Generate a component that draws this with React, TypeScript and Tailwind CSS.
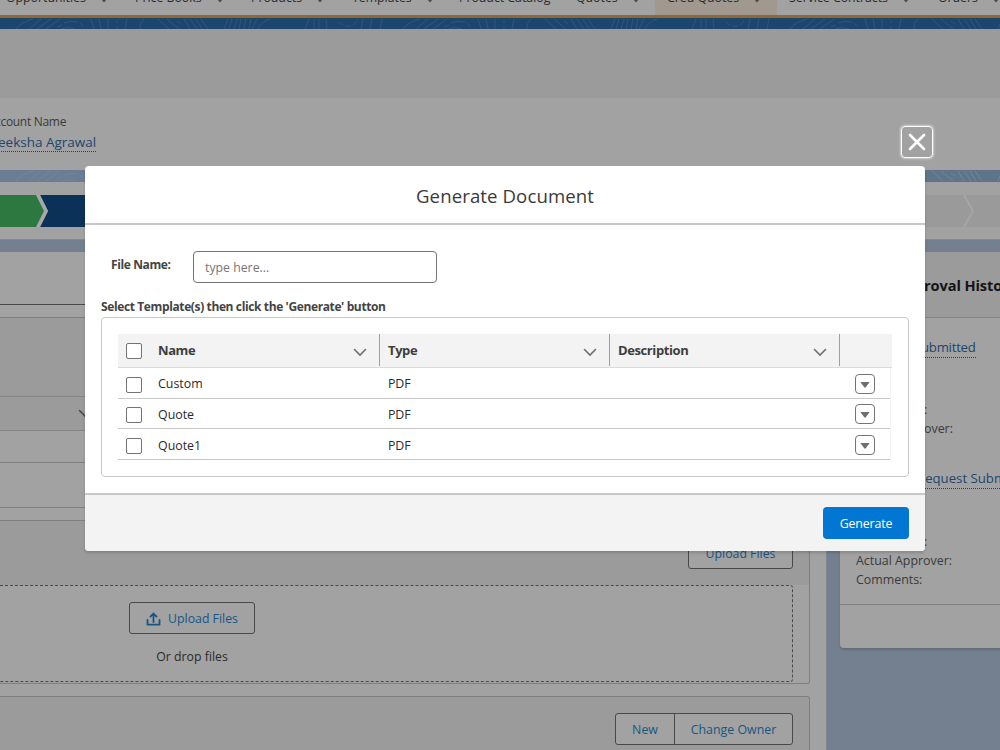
import React from "react";

const tabs = [
  { label: "Opportunities", cls: "w-[129px]", menu: true },
  { label: "Price Books", cls: "w-[116px]", menu: true },
  { label: "Products", cls: "w-[101px]", menu: true },
  { label: "Templates", cls: "w-[107px]", menu: true },
  { label: "Product Catalog", cls: "w-[117px]", menu: false },
  { label: "Quotes", cls: "w-[91px]", menu: true },
  { label: "Cred Quotes", cls: "w-[122px] bg-[#a1988f]", menu: true },
  { label: "Service Contracts", cls: "w-[149px]", menu: true },
  { label: "Orders", cls: "w-[90px]", menu: true },
];

function Nav() {
  return (
    <nav className="-ml-[7px] flex h-[15px] shrink-0 overflow-hidden pl-px">
      {tabs.map((t) => (
        <div key={t.label} className={"flex h-[15px] shrink-0 items-start gap-[15px] pl-3 " + t.cls}>
          <span className="-mt-[11px] whitespace-nowrap text-[12.3px] leading-[18px] text-[#2a2a2a]">{t.label}</span>
          {t.menu && (
            <svg width="6" height="4" viewBox="0 0 6 4" className="-mt-[1px]">
              <path d="M0 0H6L3 3.4Z" fill="#494949" />
            </svg>
          )}
        </div>
      ))}
    </nav>
  );
}

function Contours({ id, stroke, height }: { id: string; stroke: string; height: number }) {
  return (
    <svg className="block w-full" height={height} aria-hidden="true">
      <defs>
        <pattern id={id} width="387" height="12" patternUnits="userSpaceOnUse">
          <g fill="none" stroke={stroke} strokeWidth="1">
            <path d="M16 11Q21 4 33 1M29 11L41 1M37 11L51 1M46 11L60 1M57 9L62 7M64 5Q70 2 78 4M80 5L83 8M61 11Q68 8 75 11" />
            <path d="M91 1L94 11M99 1L101 11M108 1V11M117 2V5M117 8V11M127 1L125 11M144 1Q139 5 140 11" />
            <path d="M158 1L169 11M167 1L179 11M177 3L181 6M184 1L190 11M190 1L197 11M196 1L202 11M201 1L208 11" />
            <path d="M228 1L224 11M232 1L229 11M237 1L234 11M241 1L239 11M246 1L244 11M251 1L249 11M257 1L252 11M270 1Q261 4 258 11" />
            <path d="M309 1L305 11M314 1V11M319 1V11M326 1L327 11M339 4L343 7M345 8H351M353 7L357 3M363 1L361 11M372 1L370 11M382 1L380 11" />
          </g>
        </pattern>
      </defs>
      <rect width="100%" height="100%" fill={`url(#${id})`} />
    </svg>
  );
}

const Chevron = ({ color = "#706e6b" }: { color?: string }) => (
  <svg width="14" height="9" viewBox="0 0 14 9">
    <path d="M1.5 1.5 L7 7 L12.5 1.5" fill="none" stroke={color} strokeWidth="1.6" strokeLinecap="round" />
  </svg>
);

const Checkbox = () => <span className="block size-4 shrink-0 rounded-[2px] border border-[#747474] bg-white" />;

function Page() {
  return (
    <div className="flex h-[750px] flex-col bg-[#a2a2a2]">
      <Nav />
      <div className="h-[3px] shrink-0 bg-[#94672f]" />
      <div className="h-[11px] shrink-0 bg-[#1b466f]">
        <Contours id="top" stroke="#2c567b" height={11} />
      </div>
      <div className="h-[69px] shrink-0 bg-[#9b9b9b]" />
      <div className="flex h-[72px] shrink-0 flex-col items-start pt-[14px]">
        <span className="-ml-[5px] text-[12px] leading-[20px] tracking-[-0.3px] text-[#3b3b3a]">ccount Name</span>
        <span className="-ml-[2px] mt-[1px] border-b border-dotted border-[#1b466f] pt-px text-[13.5px] leading-[17px] text-[#1b466f]">
          eeksha Agrawal
        </span>
      </div>
      <div className="h-3 shrink-0 bg-linear-to-r from-[#6b7e96] to-[#5f738b]">
        <Contours id="mid" stroke="#71849b" height={12} />
      </div>
      <div className="flex h-[58px] shrink-0 items-start border-b border-[#888] pt-[13px]">
        <svg width="1000" height="32" viewBox="0 0 1000 32">
          <rect width="1000" height="32" fill="#9a9a9a" />
          <path d="M0 0H38L47 16L38 32H0Z" fill="#2d7840" />
          <path d="M40 0H500V32H40L48 16Z" fill="#0b3158" />
          <path d="M36 0H40L48 16L40 32H36L44 16Z" fill="#a8a8a8" />
          <path d="M964 0L973 16L964 32" fill="none" stroke="#a5a5a5" strokeWidth="2" />
        </svg>
      </div>
      <div className="flex h-[510px] shrink-0 bg-[#748090] pt-3">
        <main className="flex w-[827px] shrink-0 flex-col border-r border-[#808790] bg-[#a2a2a2]">
          <div className="h-[52px] shrink-0" />
          <div className="h-px shrink-0 bg-[#494949]" />
          <div className="mt-3 flex h-[191px] w-[810px] shrink-0 flex-col border-y border-r border-[#7f7f7f]">
            <div className="h-[78px] bg-[#9b9b9b]" />
            <div className="flex h-[35px] items-center border-y border-[#858585] bg-[#9b9b9b] pl-[78px]">
              <Chevron color="#494949" />
            </div>
            <div className="h-8 border-b border-[#7f7f7f]" />
          </div>
          <div className="mt-3 flex h-[164px] w-[810px] shrink-0 flex-col rounded-r-[3px] border-y border-r border-[#7f7f7f]">
            <div className="flex h-16 shrink-0 items-start justify-end bg-[#9b9b9b] pr-4 pt-4">
              <span className="flex h-8 w-[105px] items-center justify-center rounded-[3px] border border-[#494949] bg-[#a2a2a2] pt-[2px] text-[12.3px] text-[#175683]">
                Upload Files
              </span>
            </div>
            <div className="flex h-[97px] w-[793px] flex-col rounded-r-[3px] border-y border-r border-dashed border-[#494949] pl-[129px] pt-4">
              <span className="flex h-8 w-[126px] items-center justify-center gap-[7px] rounded-[3px] border border-[#494949] pt-[2px] text-[12.3px] text-[#175683]">
                <svg width="15" height="14" viewBox="0 0 15 14" fill="none" stroke="#175683">
                  <path d="M1.5 8V12.7H13.5V8" strokeWidth="1.8" strokeLinecap="round" strokeLinejoin="round" />
                  <path d="M7.5 10V2M4.4 4.6L7.5 1.5L10.6 4.6" strokeWidth="1.8" strokeLinecap="round" />
                </svg>
                Upload Files
              </span>
              <span className="mt-[13px] w-[126px] text-center text-[12.3px] leading-[20px] text-[#2a2a2a]">Or drop files</span>
            </div>
          </div>
          <div className="mt-3 flex h-[60px] w-[810px] shrink-0 items-start justify-end rounded-tr-[3px] border-r border-t border-[#7f7f7f] bg-[#9b9b9b] pr-4 pt-4">
            <div className="flex h-8 w-[178px] rounded-[3px] border border-[#494949] bg-[#a2a2a2] text-[12.4px] text-[#175683]">
              <span className="flex w-[59px] items-center justify-center border-r border-[#494949] pt-[2px]">New</span>
              <span className="flex flex-1 items-center justify-center pt-[2px]">Change Owner</span>
            </div>
          </div>
        </main>
        <aside className="ml-[13px] flex h-[396px] w-[170px] shrink-0 flex-col overflow-hidden whitespace-nowrap rounded-bl-[4px] bg-[#a2a2a2] text-[12.4px] leading-[19px] text-[#3b3b3a] shadow-[0_2px_2px_rgba(0,0,0,0.15)]">
          <div className="h-[66px] shrink-0 border-b border-[#858585] bg-[#9b9b9b] pl-[84px] pt-[24px] text-[14.6px] font-bold tracking-[-0.1px] text-[#141414]">
            roval History
          </div>
          <div className="flex h-[287px] flex-col items-start border-b border-[#7f7f7f] pl-4">
            <span className="ml-[58px] mt-5 border-b border-dotted border-[#1b466f] text-[13.2px] tracking-[-0.25px] text-[#1b466f]">Submitted</span>
            <span className="mt-[42px] pl-[68px]">:</span>
            <span className="pl-[68px]">over:</span>
            <span className="ml-[61px] mt-[31px] border-b border-dotted border-[#1b466f] text-[13.2px] text-[#1b466f]">Request Submitted</span>
            <span className="mt-[43px] pl-[68px]">:</span>
            <span>Actual Approver:</span>
            <span>Comments:</span>
          </div>
        </aside>
      </div>
    </div>
  );
}

const rows = [
  { name: "Custom", h: "h-[31px]", box: "pt-[3px]", text: "pt-[3px]" },
  { name: "Quote", h: "h-[30px]", box: "pt-[2px]", text: "pt-[3px]" },
  { name: "Quote1", h: "h-[31px]", box: "pt-[3px]", text: "pt-[5px]" },
];

function HeaderCell({ label, cls }: { label: string; cls: string }) {
  return (
    <div className={"flex h-full items-start " + cls}>
      <span className="flex-1 pl-2 pt-[7px] text-[13px] font-bold leading-[18px] tracking-[-0.4px] text-[#3e3e3c]">{label}</span>
      <span className="pr-3 pt-[14px]">
        <Chevron />
      </span>
      <span className="h-8 w-px bg-[#a09f9e]" />
    </div>
  );
}

function Modal() {
  return (
    <div className="absolute left-[85px] top-[166px] flex h-[385px] w-[840px] flex-col overflow-hidden rounded-[4px] bg-white shadow-[0_2px_3px_rgba(0,0,0,0.16)]">
      <header className="flex h-[59px] shrink-0 items-center justify-center border-b-2 border-[#c9c9c9] pb-0 pt-[3px] text-[18.6px] tracking-[0.1px] text-[#3a3a39]">
        Generate Document
      </header>
      <div className="flex h-[268px] shrink-0 flex-col px-4">
        <div className="flex pl-[10px] pt-[26px]">
          <span className="w-[82px] pt-[5px] text-[12px] font-bold leading-[18px] tracking-[-0.38px] text-[#444443]">File Name:</span>
          <span className="flex h-8 w-[244px] items-center rounded-[4px] border border-[#747474] pl-[11px] pt-[2px] text-[12.3px] text-[#757575]">
            type here...
          </span>
        </div>
        <div className="mt-[15px] h-[19px] whitespace-nowrap text-[12px] font-bold leading-[18px] tracking-[-0.38px] text-[#444443]">
          Select Template(s) then click the 'Generate' button
        </div>
        <div className="h-[160px] rounded-[4px] border border-[#c9c9c9] p-4">
          <div className="flex h-[34px] items-start border-b border-[#dddbda] bg-[#f3f3f3]">
            <span className="w-8 pl-2 pt-[9px]"><Checkbox /></span>
            <HeaderCell label="Name" cls="w-[230px]" />
            <HeaderCell label="Type" cls="w-[230px]" />
            <HeaderCell label="Description" cls="w-[230px]" />
          </div>
          <div className="w-[773px] border-r border-[#f3f3f3]">
            {rows.map((r) => (
              <div key={r.name} className={"flex items-center border-b border-[#c9c9c9] pl-2 pr-[15px] text-[12.4px] text-[#2b2b2b] " + r.h}>
                <span className={"w-8 " + r.box}><Checkbox /></span>
                <span className={"w-[230px] " + r.text}>{r.name}</span>
                <span className={"flex-1 tracking-[-0.1px] " + r.text}>PDF</span>
                <span className="mt-[1px] flex size-5 items-center justify-center rounded-[4px] border border-[#747474] pt-[2px]">
                  <svg width="10" height="6" viewBox="0 0 10 6"><path d="M1 0H9Q9.6 0 9.2 0.7L5.5 5.4Q5 6 4.5 5.4L0.8 0.7Q0.4 0 1 0Z" fill="#706e6b" /></svg>
                </span>
              </div>
            ))}
          </div>
        </div>
      </div>
      <footer className="flex h-[58px] shrink-0 items-start justify-end border-t-2 border-[#c9c9c9] bg-[#f3f3f3] pr-4 pt-3">
        <button className="flex h-8 w-[86px] items-center justify-center rounded-[4px] bg-[#0176d3] pt-[2px] text-[12.4px] tracking-[-0.15px] text-white">Generate</button>
      </footer>
    </div>
  );
}

export default function App() {
  return (
    <div className="relative h-[750px] w-[1000px] overflow-hidden font-['Open_Sans','Noto_Sans',sans-serif]">
      <Page />
      <button aria-label="Close" className="absolute left-[901px] top-[126px] flex size-8 items-center justify-center rounded-[4px] border border-white shadow-[0_0_3px_#fff]">
        <svg width="18" height="18" viewBox="0 0 18 18">
          <path d="M2 2L16 16M16 2L2 16" stroke="white" strokeWidth="2.6" strokeLinecap="round" />
        </svg>
      </button>
      <Modal />
    </div>
  );
}
